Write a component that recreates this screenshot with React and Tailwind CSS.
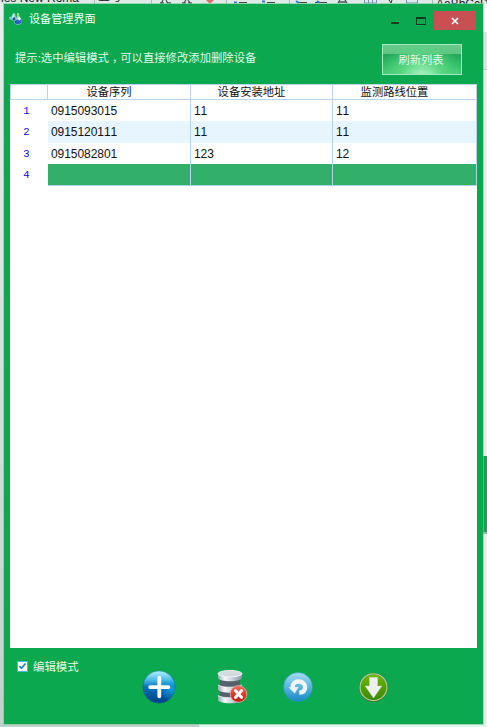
const rows = [
  { values: ['0915093015', '11', '11'], height: 'h-[21px]', color: 'bg-white' },
  { values: ['0915120111', '11', '11'], height: 'h-[22px]', color: 'bg-[#e6f5fe]' },
  { values: ['0915082801', '123', '12'], height: 'h-[21px]', color: 'bg-white' },
  { values: ['', '', ''], height: 'h-[21px]', color: 'bg-[#32af68]' },
];

function AppIcon() {
  return (
    <svg width="14" height="14" viewBox="0 0 14 14">
      <path d="M0.300 5 3 4.500 4 1.500 6 1 6.500 4 8 6 7 9 4 8.800 2 7.500 0.500 7.500Z" fill="#8ecbd5" />
      <path d="M3.500 2.500 5 1.500 5.500 4.500 3 6Z" fill="#c9ecec" />
      <path d="M3.500 6.500 6 5 6.500 8 4 8.500Z" fill="#23577c" />
      <path d="M8 1h2l.3 3.500L13 8l-.4 3L9.800 13 6 12 4.800 9.500 8 6Z" fill="#a6d5e9" />
      <path d="m5.500 9 2.500-1.500 4.500-.5.3 3.500-3.200 2L6.300 11.500Z" fill="#2a67c8" />
      <path d="m5.300 9 2 .5-.3 2.200Z" fill="#123a8a" />
      <path d="m8.500 7 2-2.500L12 7l-1.500 1.500Z" fill="#e8ffff" />
      <path d="m7.800 2 1.700-.8.500 2.500-1.500 1Z" fill="#9bdd56" />
    </svg>
  );
}

function AddIcon() {
  return (
    <svg width="34" height="34" viewBox="0 0 34 34">
      <defs>
        <linearGradient id="add-body" x1="0" y1="0" x2="0" y2="1">
          <stop offset="0" stopColor="#b5f2ff" />
          <stop offset=".28" stopColor="#4bbce7" />
          <stop offset=".5" stopColor="#0871b9" />
          <stop offset="1" stopColor="#023f86" />
        </linearGradient>
        <radialGradient id="add-glow" cx=".88" cy=".58" r=".36">
          <stop offset="0" stopColor="#10b5e9" stopOpacity=".7" />
          <stop offset="1" stopColor="#10a5e9" stopOpacity="0" />
        </radialGradient>
      </defs>
      <circle cx="17" cy="17" r="16.2" fill="url(#add-body)" stroke="#08717d" strokeWidth=".6" />
      <circle cx="17" cy="17" r="16" fill="url(#add-glow)" />
      <path d="M17.300 7.700v18.600M8.200 17.100h18.200" stroke="#fff" strokeWidth="3.800" strokeLinecap="round" />
    </svg>
  );
}

function DatabaseIcon() {
  return (
    <svg width="33" height="36" viewBox="0 0 33 36">
      <defs>
        <linearGradient id="disk">
          <stop offset="0" stopColor="#9aa9b6" />
          <stop offset=".28" stopColor="#f6f8fa" />
          <stop offset=".6" stopColor="#c8d0da" />
          <stop offset="1" stopColor="#8795a4" />
        </linearGradient>
        <linearGradient id="delete-red" x1="0" y1="0" x2="0" y2="1">
          <stop offset="0" stopColor="#f16b5d" />
          <stop offset=".6" stopColor="#d93528" />
          <stop offset="1" stopColor="#b91a12" />
        </linearGradient>
      </defs>
      <path d="M4 8v20c5 3 15 3 20 0V8Z" fill="#53626d" />
      {[23, 12.5, 1].map((y) => (
        <g key={y} transform={`translate(1 ${y})`}>
          <path d="M1 3.500V8c2 4.300 22 4.300 24 0V3.500C21 6.500 5 6.500 1 3.500Z" fill="url(#disk)" />
          <path d="M1 3.500C5 6.500 21 6.500 25 3.500" fill="none" stroke="#f5f8fa" strokeWidth=".8" />
          {y === 1 && <ellipse cx="13" cy="3.700" rx="12" ry="3.200" fill="#d3dae0" stroke="#f1f5f7" strokeWidth=".9" />}
        </g>
      ))}
      <circle cx="22.500" cy="25" r="8.300" fill="url(#delete-red)" stroke="#e9a198" strokeWidth=".9" />
      <path d="m19.400 21.500 6.200 7m0-7-6.200 7" stroke="#fff" strokeWidth="3" strokeLinecap="round" />
    </svg>
  );
}

function UndoIcon() {
  return (
    <svg width="30" height="31" viewBox="0 0 30 31">
      <defs>
        <linearGradient id="undo-body" x1="0" y1="0" x2="0" y2="1">
          <stop offset="0" stopColor="#a5daf0" />
          <stop offset=".45" stopColor="#63bbe2" />
          <stop offset="1" stopColor="#1688c4" />
        </linearGradient>
      </defs>
      <circle cx="15" cy="15" r="14.500" fill="url(#undo-body)" stroke="#299bbc" strokeWidth=".6" />
      <path d="M10 15.500C9 12 11.800 9.500 15.600 9.500c3.800 0 6.500 2.500 6.500 5.700 0 3.300-2.300 5.300-5.800 5.500" fill="none" stroke="#f3f5f7" strokeWidth="4.300" />
      <path d="m5.500 15.200 10.100-.2-3.900 6.500Z" fill="#f3f5f7" />
    </svg>
  );
}

function DownloadIcon() {
  return (
    <svg width="30" height="31" viewBox="0 0 30 31">
      <defs>
        <linearGradient id="download-body" x1="0" y1="0" x2="0" y2="1">
          <stop offset="0" stopColor="#6dbc00" />
          <stop offset="1" stopColor="#398300" />
        </linearGradient>
      </defs>
      <circle cx="14.500" cy="15.500" r="13.700" fill="url(#download-body)" stroke="#4a762c" strokeWidth="1.700" />
      <circle cx="14.500" cy="15.200" r="13.400" fill="none" stroke="#b0cf98" strokeWidth="1.200" />
      <path d="M10.500 5.500h8V14h4.300L14.500 26 6.200 14h4.300Z" fill="#edf0ee" stroke="#d5e1c7" strokeWidth=".5" />
    </svg>
  );
}

function ToolbarStrip() {
  return (
    <div className="absolute inset-x-0 top-0 h-[4px] overflow-hidden bg-[#dfe9e8]">
      <span className="absolute -left-[3px] -top-[10px] whitespace-nowrap text-[12px] leading-[16px] text-[#222]">nes New Roma</span>
      <span className="absolute left-[98px] -top-[11px] whitespace-nowrap text-[12px] leading-[16px] text-[#222]">五号</span>
      <svg className="absolute inset-0" width="487" height="4">
        <path d="M94.500 0v4M151.500 0v4M226.500 0v4M289.500 0v4M432.500 0v4" stroke="#aeb9bb" />
        <path d="m161 4 2-4m3 0 2 4m-8-1h4m3 0h4M184 3l2-3m2 0 2 3m-8 0h4m2 0h4M338 3l2-3m5 0 2 3m-8-1h7" stroke="#4c5658" strokeWidth="1.300" />
        <path d="m206 0 4 4 4-4" fill="#dc7067" />
        <path d="M239 2.500h8M267 2.500h8M297 2.500h10m8 0h12" stroke="#444" />
        <path d="M234 2.500h3M262 1.500h3M296 1l3 2M317 1l3 2" stroke="#327fd2" strokeWidth="2" />
        <path d="M364.500 0v3h12V0m-8 0v3m4-3v3M406.500 0v3h11V0" fill="none" stroke="#7893bb" />
        <path d="m389 0 2 3 1-3" stroke="#333" fill="none" />
      </svg>
      <span className="absolute left-[436px] -top-[3px] whitespace-nowrap text-[12px] leading-[14px] text-[#222]">AaBbCcD</span>
    </div>
  );
}

export default function App() {
  return (
    <div className="relative h-[727px] w-[487px] overflow-hidden bg-[#e2f3ec] font-['Liberation_Sans','Noto_Sans_CJK_SC',sans-serif]">
      <ToolbarStrip />
      <div className="absolute left-0 top-[4px] h-[723px] w-[4px] bg-gradient-to-b from-[#e4f0ee] to-[#c2d2cb]" />
      <div className="absolute right-0 top-[4px] h-[28px] w-[4px] bg-white" />
      <div className="absolute right-0 top-[32px] h-[38px] w-[4px] border-b border-[#b8c8c6] bg-[#d7e5e3]" />
      <div className="absolute right-0 top-[456px] h-[78px] w-[4px] border-b-2 border-[#91b9a6] bg-[#0ca850]" />
      <div className="absolute bottom-0 left-0 h-[3px] w-[199px] bg-[#c3cfca]" />

      <main className="absolute left-[4px] top-[4px] flex h-[720px] w-[479px] flex-col bg-[#0ca850] outline outline-1 outline-[#6fcb9a]/60">
        <header className="flex h-[32px] shrink-0 items-start">
          <div className="ml-[5px] mt-[8px]"><AppIcon /></div>
          <h1 className="ml-[6px] mt-[7px] whitespace-nowrap text-[11.100px] leading-[16px] text-[#f1fff5]">设备管理界面</h1>
          <div className="ml-auto mr-[7px] mt-[7px] flex">
            <div className="flex h-[19px] w-[26px] items-end justify-center pb-[6px]"><span className="h-[2px] w-[8px] bg-[#103d1d]" /></div>
            <div className="flex h-[19px] w-[26px] items-center justify-center"><span className="h-[8px] w-[10px] border border-t-2 border-[#103d1d]" /></div>
            <button aria-label="关闭" className="flex h-[19px] w-[42px] items-center justify-center bg-[#c85052]">
              <svg width="8" height="8" viewBox="0 0 8 8"><path d="m1 1 6 6m0-6L1 7" stroke="white" strokeWidth="1.700" /></svg>
            </button>
          </div>
        </header>

        <section className="flex h-[48px] shrink-0 items-start justify-between">
          <p className="ml-[11px] mt-[14px] whitespace-nowrap text-[11.350px] leading-[17px] text-[#dff9e8]">提示:选中编辑模式<span className="relative left-[3px]">，</span>可以直接修改添加删除设备</p>
          <button className="mr-[21px] mt-[8px] flex h-[31px] w-[80px] items-center justify-center border border-[#a5e8bd] bg-[radial-gradient(ellipse_at_50%_110%,#b4f5c6_0%,#57d681_38%,transparent_78%),linear-gradient(to_bottom,#68c98b_0%,#5fc584_31%,#24a65a_32%,#2bbb63_70%,#43ca75_100%)] pr-[2px] pt-[1px] text-[11.200px] text-[#e2faea]">刷新列表</button>
        </section>

        <section className="mx-[6px] h-[564px] shrink-0 bg-white text-[11.300px] text-[#111]">
          <div className="grid h-[16px] grid-cols-[38px_143px_142px_144px] border-y border-[#b5d3ec] leading-[15px]">
            <div className="border-x border-[#b9d3ea]" />
            <div className="border-r border-[#b9d3ea] pr-[20px] text-center">设备序列</div>
            <div className="border-r border-[#b9d3ea] pr-[20px] text-center">设备安装地址</div>
            <div className="border-r border-[#b9d3ea] pr-[20px] text-center">监测路线位置</div>
          </div>
          {rows.map((row, index) => (
            <div key={index} className={`grid grid-cols-[38px_143px_142px_144px] ${row.height}`}>
              <div className="pr-[5px] text-center font-['Liberation_Mono'] text-[10.500px] leading-[22px] text-[#0808e8]">{index + 1}</div>
              {row.values.map((value, column) => (
                <div key={column} className={`border-b border-r border-[#b5d3ec] pl-[3px] text-[12px] leading-[22px] tracking-[-0.05px] [font-kerning:none] ${row.color}`}>{value}</div>
              ))}
            </div>
          ))}
        </section>

        <footer className="flex h-[76px] shrink-0 items-start">
          <label className="ml-[13px] mt-[11px] flex h-[16px] w-[125px] items-center gap-[5px] text-[11.400px] leading-[16px] text-[#e2faea]">
            <span className="-mt-px flex h-[11px] w-[11px] items-center justify-center border border-[#44b8e8] bg-white">
              <svg width="9" height="9" viewBox="0 0 9 9"><path d="m1.500 4 2 2.300L7.500 1.500" fill="none" stroke="#1682d3" strokeWidth="1.700" /></svg>
            </span>
            <span className="whitespace-nowrap">编辑模式</span>
          </label>
          <div className="mt-[22px]"><AddIcon /></div>
          <div className="ml-[40px] mt-[21px]"><DatabaseIcon /></div>
          <div className="ml-[34px] mt-[24px]"><UndoIcon /></div>
          <div className="ml-[46px] mt-[24px]"><DownloadIcon /></div>
        </footer>
      </main>
    </div>
  );
}
